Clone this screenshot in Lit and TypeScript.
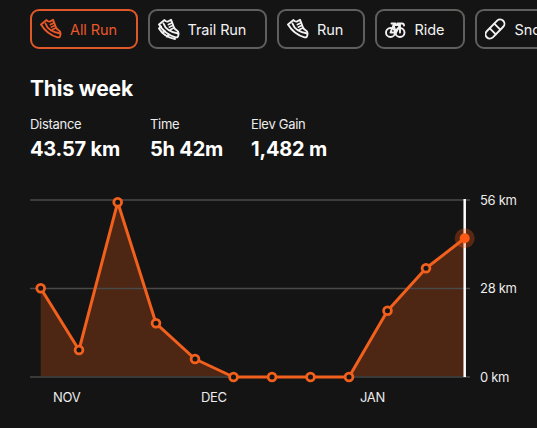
import { LitElement, html, css, svg } from "lit";
import { customElement } from "lit/decorators.js";

const shoeBody = svg`<path d="M1 7.500 6.500 3Q8 5 10 4.500L13 2.700 16 10.500Q17 12.500 19 13.500 20.500 14.500 20.500 16.500L20.300 18.500Q20 20.800 17.500 20.300C11 18.500 5 14 1 7.500Z"/><path d="M5.500 6.500C7 11 11 15 20.300 16.500"/><path d="M10.500 7.500 13.800 6M11.500 10 14.800 8.500M12.500 12.500 15.800 11"/>`;
const shoe = shoeBody;
const trail = svg`${shoeBody}<path d="M1 11.500C4 16.500 9 20.500 17 22M1 11.500 3 9.500M4.500 16 6.500 14M9 19.800 10.500 17.500"/>`;
const bike = svg`<circle cx="5.500" cy="15.500" r="4.500"/><circle cx="15" cy="15.500" r="4.500"/><path d="M5.500 15.500 8.500 8H15V15.500M8.500 8 11 15.500H5.500M11 15.500 15 8M6.500 6.500H10.500M12.500 6.500H17Q19 6.500 19 8.500"/>`;
const board = svg`<path d="M12.160 3.660 1.760 14.260A4.300 4.300 0 0 0 7.840 20.340L18.240 9.740A4.300 4.300 0 0 0 12.160 3.660Z"/><path d="M4.800 11.300 10.800 17.300M9.300 6.700 15.300 12.700"/>`;

const chips = [
  { label: "All Run", icon: shoe, active: true, width: 107.5 },
  { label: "Trail Run", icon: trail, active: false, width: 119.5 },
  { label: "Run", icon: shoe, active: false, width: 87.5 },
  { label: "Ride", icon: bike, active: false, width: 90 },
  { label: "Snowboard", icon: board, active: false, width: 130 },
];
const stats = [
  ["Distance", "43.57 km"],
  ["Time", "5h 42m"],
  ["Elev Gain", "1,482 m"],
];
const pts: [number, number][] = [
  [40.7, 288.3], [79, 350], [117.7, 202.3], [156, 323.3], [195, 359], [233.5, 377],
  [272, 377], [310.5, 377], [349, 377], [387.5, 310.7], [426, 268.3], [464.7, 238.3],
];
const Y0 = 190;
const p = pts.map(([x, y]) => `${x},${y - Y0}`).join(" ");
const last = pts[pts.length - 1];

@customElement("app-root")
export class AppRoot extends LitElement {
  static styles = css`
    :host {
      display: block;
      width: 537px;
      height: 428px;
      overflow: hidden;
      background: #141414;
      color: #fff;
      font-family: Inter, "Liberation Sans", sans-serif;
    }
    .chips {
      display: flex;
      gap: 10px;
      padding: 9px 0 0 30px;
      white-space: nowrap;
    }
    .chip {
      flex: none;
      box-sizing: border-box;
      height: 40px;
      display: flex;
      align-items: center;
      gap: 6px;
      padding-left: 8px;
      border: 2px solid #5f5f5d;
      border-radius: 9px;
      font-size: 14.5px;
      letter-spacing: -0.1px;
      color: #f2f2f2;
    }
    .chip.active {
      border-color: #e0582a;
      color: #e8582a;
    }
    .chip svg {
      flex: none;
      width: 24px;
      height: 24px;
      fill: none;
      stroke: currentColor;
      stroke-width: 1.900;
      stroke-linejoin: round;
      stroke-linecap: round;
    }
    h2 {
      margin: 27px 0 0 30px;
      font-size: 21px;
      line-height: 26px;
      font-weight: 700;
      letter-spacing: -0.15px;
    }
    .stats {
      display: grid;
      grid-template-columns: 120px 101px auto;
      padding: 14px 0 0 30px;
    }
    .label {
      font-size: 13px;
      line-height: 16px;
      color: #ececec;
      letter-spacing: -0.3px;
    }
    .value {
      margin-top: 5px;
      font-size: 20px;
      line-height: 24px;
      font-weight: 700;
      letter-spacing: -0.2px;
    }
    .chart {
      display: block;
      margin-top: 29px;
    }
    .chart text {
      font-size: 13px;
      fill: #ececec;
      letter-spacing: -0.3px;
    }
    .grid { stroke: #4a4a48; stroke-width: 1.300; }
    .base { stroke: #3a3a38; stroke-width: 2; }
    .area { fill: #fc5a14; fill-opacity: 0.25; stroke: none; }
    .line { fill: none; stroke: #f2601d; stroke-width: 3; stroke-linejoin: round; }
    .dot { fill: #141414; stroke: #f2601d; stroke-width: 2.800; }
    .cursor { stroke: #fff; stroke-width: 2.500; }
    .halo { fill: #fc5a14; fill-opacity: 0.3; }
    .head { fill: #fc5a14; }
  `;

  render() {
    return html`
      <div class="chips">
        ${chips.map(
          (c) => html`<div class="chip ${c.active ? "active" : ""}" style="width:${c.width}px">
            <svg viewBox="0 0 24 24">${c.icon}</svg><span>${c.label}</span>
          </div>`
        )}
      </div>
      <h2>This week</h2>
      <div class="stats">
        ${stats.map(
          ([l, v]) => html`<div><div class="label">${l}</div><div class="value">${v}</div></div>`
        )}
      </div>
      <svg class="chart" width="537" height="230" viewBox="0 0 537 230">
        <line class="grid" x1="30" x2="470" y1="10" y2="10"></line>
        <polygon class="area" points="${pts[0][0]},187 ${p} ${last[0]},187"></polygon>
        <line class="grid" x1="30" x2="470" y1="98.500" y2="98.500"></line>
        <line class="base" x1="30" x2="470" y1="187" y2="187"></line>
        <line class="cursor" x1="${last[0]}" x2="${last[0]}" y1="9" y2="187"></line>
        <polyline class="line" points="${p}"></polyline>
        ${pts.slice(0, -1).map(
          ([x, y]) => svg`<circle class="dot" cx="${x}" cy="${y - Y0}" r="3.900"></circle>`
        )}
        <circle class="halo" cx="${last[0]}" cy="${last[1] - Y0}" r="10"></circle>
        <circle class="head" cx="${last[0]}" cy="${last[1] - Y0}" r="5"></circle>
        <text x="480" y="15">56 km</text>
        <text x="480" y="103">28 km</text>
        <text x="480" y="192">0 km</text>
        <text x="53" y="212">NOV</text>
        <text x="201" y="212">DEC</text>
        <text x="360" y="212">JAN</text>
      </svg>
    `;
  }
}
